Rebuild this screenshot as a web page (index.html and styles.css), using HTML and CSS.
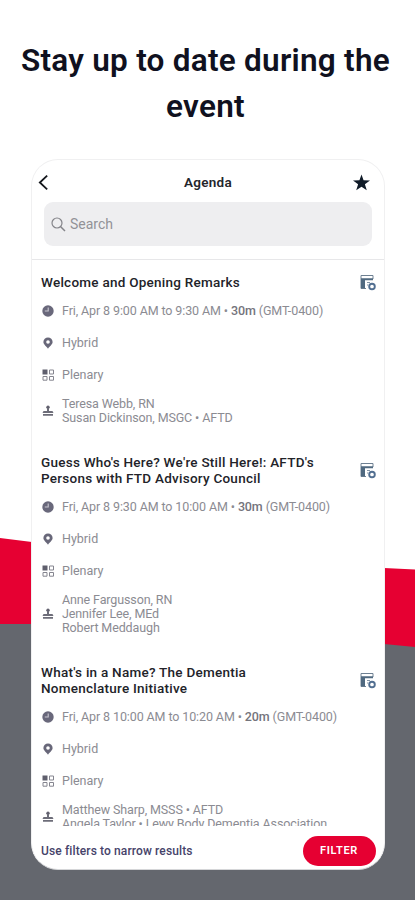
FILE: index.html
```html
<!DOCTYPE html>
<html lang="en">
<head>
<meta charset="utf-8">
<title>Agenda</title>
<link rel="stylesheet" href="styles.css">
</head>
<body>
<svg class="backdrop" viewBox="0 0 415 900" aria-hidden="true">
  <path fill="#e60032" d="M0 538L32 542L384 568L415 569.500V647H0Z"/>
  <path fill="#64676e" d="M0 624H32L384 644L415 647V900H0Z"/>
</svg>
<svg width="0" height="0" class="defs" aria-hidden="true">
  <symbol id="clock" viewBox="0 0 12 12"><circle cx="6" cy="6" r="5.700" fill="#69687b"/><path d="M6.200 2.500V6H2.800" fill="none" stroke="#c9c8d2" stroke-width="1.100"/></symbol>
  <symbol id="pin" viewBox="0 0 12 12"><path fill="#686779" fill-rule="evenodd" d="M6 .500a4.600 4.600 0 0 0-4.600 4.600C1.400 7.600 4.500 9.500 6 11.700 7.500 9.500 10.600 7.600 10.600 5.100A4.600 4.600 0 0 0 6 .500ZM6 3.200a1.800 1.800 0 1 1 0 3.600 1.800 1.800 0 0 1 0-3.600Z"/></symbol>
  <symbol id="grid" viewBox="0 0 12 12"><path fill="#5f5f6d" d="M.500.500h5v5h-5z"/><path fill="none" stroke="#85858f" d="M7.500 1h4v4h-4zM1 7.500h4v3.700H1zM7.500 7.500h4v3.700h-4z"/></symbol>
  <symbol id="speaker" viewBox="0 0 12 12"><circle cx="6" cy="2.300" r="1.700" fill="#62616f"/><path fill="#6d6d79" d="M5 3h2v3h3.500l1 2H.500l1-2H5zM1 9h10v1.700H1z"/></symbol>
  <symbol id="add" viewBox="0 0 16 17"><path fill="none" stroke="#6e8092" d="M1 4V1.500h12V5M1 4v10.500h5"/><path fill="#506980" d="M1 4.200h12v2H5v8H1z"/><path fill="none" stroke="#8495a6" d="M7 8.500h3M7 11h1"/><circle cx="12" cy="12.500" r="2.800" fill="#fff" stroke="#526f91" stroke-width="1.900"/></symbol>
</svg>
<main>
  <h1>Stay up to date during the event</h1>
  <section class="phone">
    <header>
      <svg class="back" viewBox="0 0 12 18"><path d="M10 1.500L2 9l8 7.500" fill="none" stroke="#15181d" stroke-width="2"/></svg>
      <h2>Agenda</h2>
      <svg class="star" viewBox="0 0 18 17"><path fill="#101b28" d="M9 0l2.200 6.200L18 6.300l-5.400 4 2 6.500L9 12.900l-5.600 3.900 2-6.500L0 6.300l6.800-.1z"/></svg>
    </header>
    <div class="search">
      <svg viewBox="0 0 15 15"><circle cx="6" cy="6" r="5" fill="none" stroke="#85858a" stroke-width="1.200"/><path d="M9.500 9.500L14 14" stroke="#85858a" stroke-width="1.500"/></svg>
      <span>Search</span>
    </div>
    <div class="list">
      <article>
        <div class="head"><h3>Welcome and Opening Remarks</h3><svg><use href="#add"/></svg></div>
        <div class="row"><svg><use href="#clock"/></svg><p class="date">Fri, Apr 8 9:00 AM to 9:30 AM • <b>30m</b> (GMT-0400)</p></div>
        <div class="row"><svg><use href="#pin"/></svg><p>Hybrid</p></div>
        <div class="row"><svg><use href="#grid"/></svg><p>Plenary</p></div>
        <div class="row people"><svg><use href="#speaker"/></svg><p>Teresa Webb, RN<br>Susan Dickinson, MSGC • AFTD</p></div>
      </article>
      <article>
        <div class="head"><h3>Guess Who's Here? We're Still Here!: AFTD's<br>Persons with FTD Advisory Council</h3><svg><use href="#add"/></svg></div>
        <div class="row"><svg><use href="#clock"/></svg><p class="date">Fri, Apr 8 9:30 AM to 10:00 AM • <b>30m</b> (GMT-0400)</p></div>
        <div class="row"><svg><use href="#pin"/></svg><p>Hybrid</p></div>
        <div class="row"><svg><use href="#grid"/></svg><p>Plenary</p></div>
        <div class="row people"><svg><use href="#speaker"/></svg><p>Anne Fargusson, RN<br>Jennifer Lee, MEd<br>Robert Meddaugh</p></div>
      </article>
      <article>
        <div class="head"><h3>What's in a Name? The Dementia<br>Nomenclature Initiative</h3><svg><use href="#add"/></svg></div>
        <div class="row"><svg><use href="#clock"/></svg><p class="date">Fri, Apr 8 10:00 AM to 10:20 AM • <b>20m</b> (GMT-0400)</p></div>
        <div class="row"><svg><use href="#pin"/></svg><p>Hybrid</p></div>
        <div class="row"><svg><use href="#grid"/></svg><p>Plenary</p></div>
        <div class="row people"><svg><use href="#speaker"/></svg><p>Matthew Sharp, MSSS • AFTD<br>Angela Taylor • Lewy Body Dementia Association</p></div>
      </article>
    </div>
    <footer><span>Use filters to narrow results</span><button>FILTER</button></footer>
  </section>
</main>
</body>
</html>
```

FILE: styles.css
```css
* { box-sizing: border-box; }
body { margin: 0; height: 900px; overflow: hidden; background: #fff; font-family: Roboto, "Liberation Sans", sans-serif; }
h1, h2, h3, p { margin: 0; }
svg { display: block; flex: none; }
.backdrop { position: absolute; inset: 0; width: 415px; height: 900px; z-index: -1; }
.defs { position: absolute; }
main { display: flow-root; height: 900px; }
h1 { margin: 38px 12px 0 8px; height: 121px; text-align: center; font-size: 31.5px; line-height: 46px; font-weight: 600; letter-spacing: .26px; color: #101120; }
.phone { width: 354px; height: 711px; margin-left: 31px; border: 1px solid #f0f0f1; border-bottom-color: #d5d6d8; border-radius: 27px; background: #fff; overflow: hidden; display: flex; flex-direction: column; }
header { height: 42px; flex: none; display: flex; align-items: center; justify-content: space-between; padding: 2px 14px 0 6px; }
.back { width: 11px; height: 17px; }
h2 { font-size: 13.500px; font-weight: 600; letter-spacing: .3px; color: #24262b; padding-left: 14px; }
.star { width: 17px; height: 17px; }
.search { height: 44px; flex: none; margin: 0 12px 13px; padding: 0 7px; display: flex; align-items: center; gap: 4px; border-radius: 9px; background: #eeeef0; color: #929297; font-size: 14px; }
.search svg { width: 15px; height: 15px; }
.list { height: 566.500px; flex: none; overflow: hidden; border-top: 1px solid #e7e7e9; padding: 13.800px 8px 0 9px; }
article { margin-bottom: 28.200px; }
.head { display: flex; align-items: center; justify-content: space-between; margin-bottom: 5.700px; }
.head > svg { width: 16px; height: 17px; margin-bottom: -1px; }
h3 { font-size: 13.500px; line-height: 16px; font-weight: 500; letter-spacing: .25px; color: #222329; white-space: nowrap; }
.row { height: 32px; display: flex; align-items: center; gap: 8px; padding-left: 1px; }
.row svg { width: 12px; height: 12px; }
.row p { font-size: 12.500px; line-height: 14.200px; color: #8b8b92; white-space: nowrap; }
.row .date { letter-spacing: -.11px; }
.row b { font-weight: 500; color: #74747c; }
.people { height: auto; margin-top: 5.600px; }
.row.people p { letter-spacing: -.12px; }
footer { flex: 1; display: flex; align-items: center; justify-content: space-between; padding: 7px 8px 0 9px; }
footer span { font-size: 12px; font-weight: 500; color: #46436a; white-space: nowrap; letter-spacing: .12px; }
button { width: 73px; height: 30px; border: 0; border-radius: 15px; padding: 0 1px 0 0; background: #e60032; color: #fff; font: 600 11px Roboto, sans-serif; letter-spacing: .7px; }
```
